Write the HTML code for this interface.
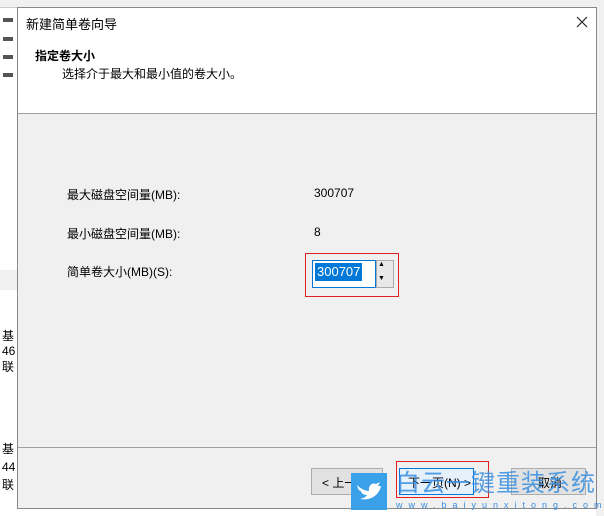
<!DOCTYPE html>
<html><head><meta charset="utf-8"><style>
body{margin:0;width:604px;height:516px;position:relative;overflow:hidden;background:#fff;font-family:"Liberation Sans","Noto Sans CJK SC",sans-serif;font-size:12px;color:#000}
.a{position:absolute}
</style></head><body>
<div class="a" style="left:0;top:0;width:604px;height:7px;background:#f0f0f0;border-bottom:1px solid #ccc"></div>
<div class="a" style="left:0;top:270px;width:17px;height:20px;background:#f0f0f0"></div>
<div class="a" style="left:3px;top:18px;width:10px;height:4px;background:#555"></div>
<div class="a" style="left:3px;top:37px;width:10px;height:4px;background:#555"></div>
<div class="a" style="left:3px;top:55px;width:10px;height:4px;background:#555"></div>
<div class="a" style="left:3px;top:73px;width:10px;height:4px;background:#555"></div>
<div class="a" style="left:2px;top:327px;font-size:12px">基<br>46<br>联</div>
<div class="a" style="left:2px;top:440px;font-size:12px;line-height:18px">基<br>44<br>联</div>
<div class="a" style="left:596px;top:7px;width:8px;height:509px;background:#f0f0f0"></div>
<div class="a" style="left:17px;top:7px;width:578px;height:500px;border:1px solid #888;background:#f0f0f0"></div>
<div class="a" style="left:18px;top:8px;width:578px;height:105px;background:#fff;border-bottom:1px solid #a0a0a0"></div>
<div class="a" style="left:26px;top:14px;font-size:13px">新建简单卷向导</div>
<svg class="a" style="left:576px;top:16px" width="12" height="12"><path d="M1 1L11 11M11 1L1 11" stroke="#222" stroke-width="1.2"/></svg>
<div class="a" style="left:35px;top:47px;font-weight:bold">指定卷大小</div>
<div class="a" style="left:62px;top:65px">选择介于最大和最小值的卷大小。</div>
<div class="a" style="left:67px;top:186px">最大磁盘空间量(MB):</div>
<div class="a" style="left:314px;top:186px">300707</div>
<div class="a" style="left:67px;top:225px">最小磁盘空间量(MB):</div>
<div class="a" style="left:314px;top:225px">8</div>
<div class="a" style="left:67px;top:263px">简单卷大小(MB)(S):</div>
<div class="a" style="left:305px;top:253px;width:92px;height:42px;border:1px solid #e02020"></div>
<div class="a" style="left:312px;top:260px;width:62px;height:26px;border:1px solid #0078d7;background:#fff"></div>
<div class="a" style="left:315px;top:263px;height:18px;background:#0078d7;color:#fff;font-size:13px;line-height:18px;padding:0 2px">300707</div>
<div class="a" style="left:376px;top:260px;width:16px;height:26px;border:1px solid #aaa;background:#e8e8e8"></div>
<div class="a" style="left:378px;top:261px;font-size:7px">▲</div>
<div class="a" style="left:378px;top:275px;font-size:7px">▼</div>
<div class="a" style="left:18px;top:447px;width:578px;height:1px;background:#a0a0a0"></div>
<div class="a" style="left:311px;top:468px;width:70px;height:25px;border:1px solid #adadad;background:#e1e1e1"></div>
<div class="a" style="left:322px;top:474px">&lt; 上一</div>
<div class="a" style="left:396px;top:461px;width:91px;height:35px;border:1px solid #e02020"></div>
<div class="a" style="left:399px;top:468px;width:73px;height:25px;border:1px solid #0078d7;background:#e5f1fb"></div>
<div class="a" style="left:408px;top:474px">下一页(N) &gt;</div>
<div class="a" style="left:511px;top:468px;width:73px;height:25px;border:1px solid #adadad;background:#e1e1e1"></div>
<div class="a" style="left:538px;top:474px">取消</div>
<div class="a" style="left:351px;top:473px;width:36px;height:37px;background:#3aa0e8"></div>
<svg class="a" style="left:355px;top:479px" width="28" height="24"><path d="M2 6C6 10 10 12 14 12C13 7 17 3 21 5L25 3L23 7L26 7C24 16 16 22 5 20C9 19 11 18 12 16C8 16 6 14 6 12C4 12 3 10 2 6Z" fill="#fff"/></svg>
<div class="a" style="left:396px;top:471px;font-size:24px;line-height:26px;color:#3a8fe0;opacity:.85;letter-spacing:1px">白云一键重装系统</div>
<div class="a" style="left:396px;top:500px;font-size:9px;color:#3a8fe0;letter-spacing:6px">www.baiyunxitong.com</div>
</body></html>
